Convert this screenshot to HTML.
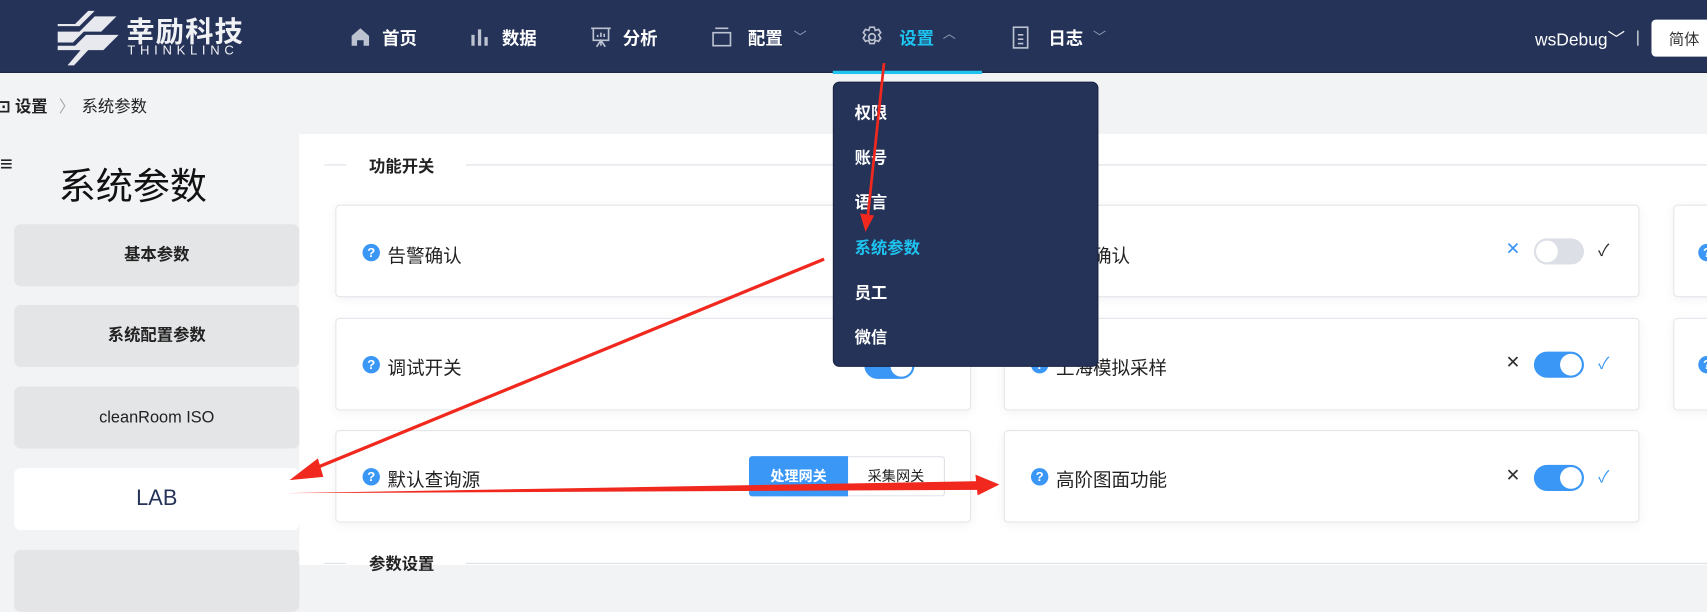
<!DOCTYPE html>
<html><head><meta charset="utf-8"><style>
*{margin:0;padding:0;box-sizing:border-box}
html,body{width:1707px;height:565px;overflow:hidden}
body{background:#f2f3f5;font-family:"Liberation Sans","Noto Sans CJK SC",sans-serif;color:#222}
#w{position:absolute;left:0;top:0;width:1568px;height:519px;transform:scale(1.08865);transform-origin:0 0;background:#f2f3f5}
.a{position:absolute}
.hdr{left:0;top:0;width:1568px;height:67px;background:#253358;border-bottom:1px solid #1a2444}
.nav{color:#fff;font-size:16px;font-weight:bold;top:22px}
.chev{color:#8c97b3;font-size:12px;top:25px}
.side{left:13px;width:262px;height:57px;background:#e4e5e7;border-radius:6px;text-align:center;line-height:57px;font-size:15px;font-weight:bold;color:#222}
.card{background:#fff;border:1px solid #e4e6eb;border-radius:4px;box-shadow:0 2px 10px rgba(0,0,0,.05);height:85px}
.q{width:16px;height:16px;border-radius:50%;background:#3a97f5;color:#fff;font-size:12px;line-height:16px;text-align:center;font-weight:bold}
.lbl{font-size:17px;color:#222}
.tg{width:46px;height:24px;border-radius:12px;background:#3a97f5}
.tg::after{content:"";position:absolute;right:2px;top:2px;width:20px;height:20px;border-radius:50%;background:#fff}
.tg.off{background:#dcdfe6}
.tg.off::after{left:2px;right:auto}
.dd{left:765px;top:75px;width:244px;height:262px;background:#253358;border-radius:6px;border:1px solid #1a2444}
.di{left:19px;color:#fff;font-size:15px;font-weight:bold}
</style></head><body><div id="w">
<div class="a hdr"></div>
<svg class="a" style="left:52px;top:8px" width="58" height="56" viewBox="0 0 58 56">
<path d="M1 14h16L29 2h6L21 16H1z M1 21h20L35 7h20L41 21H25L15 31H1z M1 34h16l10-10h30L43 38H29L16 52h-6l12-14H1z" fill="#e8e9ee"/>
</svg>
<div class="a" style="left:116px;top:9px;color:#f0f1f4;font-size:26px;font-weight:bold;letter-spacing:1px">幸励科技</div>
<div class="a" style="left:117px;top:39px;color:#f0f1f4;font-size:12px;letter-spacing:4.3px">THINKLINC</div>
<svg class="a" style="left:322px;top:25px" width="18" height="18"><path d="M1 8L9 1l8 7v9h-5v-5H6v5H1z" fill="#bcc2d0"/></svg>
<div class="a nav" style="left:351px">首页</div>
<svg class="a" style="left:432px;top:25px" width="18" height="18"><rect x="1" y="7" width="3" height="10" fill="#bcc2d0"/><rect x="7" y="2" width="3" height="15" fill="#bcc2d0"/><rect x="13" y="9" width="3" height="8" fill="#bcc2d0"/></svg>
<div class="a nav" style="left:461px">数据</div>
<svg class="a" style="left:542px;top:24px" width="20" height="20" fill="none" stroke="#bcc2d0" stroke-width="1.5"><path d="M1 2h18M3 2v11h14V2M10 13v5M6 19l4-6 4 6M7 10v-2M10 10V6M13 10V7"/></svg>
<div class="a nav" style="left:572px">分析</div>
<svg class="a" style="left:653px;top:25px" width="20" height="18" fill="none" stroke="#bcc2d0" stroke-width="1.5"><path d="M4 1h12M2 5h16v12H2z"/></svg>
<div class="a nav" style="left:687px">配置</div><div class="a chev" style="left:729px">﹀</div>
<svg class="a" style="left:791px;top:24px" width="20" height="20" fill="none" stroke="#bcc2d0" stroke-width="1.5"><circle cx="10" cy="10" r="3"/><path d="M8 1h4l1 3 3-1 2 3-2 2 2 3-2 3-3-1-1 3H8l-1-3-3 1-2-3 2-3-2-2 2-3 3 1z"/></svg>
<div class="a nav" style="left:826px;color:#1ec4f0">设置</div><div class="a chev" style="left:866px;top:22px">︿</div>
<div class="a" style="left:765px;top:65px;width:137px;height:3px;background:#1ec4f0"></div>
<svg class="a" style="left:930px;top:24px" width="16" height="22" fill="none" stroke="#bcc2d0" stroke-width="1.5"><rect x="1" y="1" width="13" height="19"/><path d="M5 8h5M5 12h5M5 16h5"/></svg>
<div class="a nav" style="left:963px">日志</div><div class="a chev" style="left:1004px">﹀</div>
<div class="a" style="left:1410px;top:23px;color:#fff;font-size:16px">wsDebug﹀</div>
<div class="a" style="left:1504px;top:28px;width:1px;height:14px;background:#fff"></div>
<div class="a" style="left:1517px;top:18px;width:60px;height:34px;background:#fff;border-radius:4px;font-size:14px;color:#333;padding:8px 0 0 16px">简体</div>

<div class="a" style="left:-3px;top:87px;font-size:15px;color:#222"><b>⊡ 设置</b> <span style="color:#aaa;margin:0 6px">〉</span>系统参数</div>
<div class="a" style="left:0;top:140px;font-size:20px;font-weight:bold">≡</div>
<div class="a" style="left:54px;top:144px;font-size:34px;color:#111">系统参数</div>
<div class="a side" style="top:206px">基本参数</div>
<div class="a side" style="top:280px">系统配置参数</div>
<div class="a side" style="top:355px;font-weight:normal">cleanRoom ISO</div>
<div class="a side" style="top:430px;background:#fff;font-weight:normal;font-size:20px;color:#253358">LAB</div>
<div class="a side" style="top:505px"></div>

<div class="a" style="left:275px;top:123px;width:1293px;height:396px;background:#fff"></div>
<div class="a" style="left:298px;top:151px;width:20px;height:1px;background:#dcdfe6"></div>
<div class="a" style="left:428px;top:151px;width:1140px;height:1px;background:#dcdfe6"></div>
<div class="a" style="left:339px;top:142px;font-size:15px;font-weight:bold">功能开关</div>
<div class="a" style="left:298px;top:517px;width:20px;height:1px;background:#dcdfe6"></div>
<div class="a" style="left:428px;top:517px;width:1140px;height:1px;background:#dcdfe6"></div>
<div class="a" style="left:339px;top:507px;font-size:15px;font-weight:bold">参数设置</div>

<div class="a card" style="left:308px;top:188px;width:584px"></div>
<div class="a card" style="left:308px;top:292px;width:584px"></div>
<div class="a card" style="left:308px;top:395px;width:584px"></div>
<div class="a card" style="left:922px;top:188px;width:584px"></div>
<div class="a card" style="left:922px;top:292px;width:584px"></div>
<div class="a card" style="left:922px;top:395px;width:584px"></div>
<div class="a card" style="left:1537px;top:188px;width:200px"></div>
<div class="a card" style="left:1537px;top:292px;width:200px"></div>

<div class="a q" style="left:333px;top:224px">?</div><div class="a lbl" style="left:356px;top:221px">告警确认</div>
<div class="a q" style="left:333px;top:327px">?</div><div class="a lbl" style="left:356px;top:324px">调试开关</div>
<div class="a q" style="left:333px;top:430px">?</div><div class="a lbl" style="left:356px;top:427px">默认查询源</div>
<div class="a tg" style="left:794px;top:324px"></div>
<div class="a" style="left:688px;top:419px;width:91px;height:37px;background:#3a97f5;border-radius:3px 0 0 3px;color:#fff;font-size:13px;font-weight:bold;text-align:center;line-height:37px">处理网关</div>
<div class="a" style="left:779px;top:419px;width:89px;height:37px;border:1px solid #dcdfe6;border-left:0;border-radius:0 3px 3px 0;font-size:13px;text-align:center;line-height:35px">采集网关</div>

<div class="a q" style="left:947px;top:224px">?</div><div class="a lbl" style="left:970px;top:221px">告警确认</div>
<div class="a q" style="left:947px;top:327px">?</div><div class="a lbl" style="left:970px;top:324px">上海模拟采样</div>
<div class="a q" style="left:947px;top:430px">?</div><div class="a lbl" style="left:970px;top:427px">高阶图面功能</div>
<div class="a" style="left:1383px;top:219px;color:#3a97f5;font-size:16px">✕</div>
<div class="a tg off" style="left:1409px;top:219px"></div>
<div class="a" style="left:1468px;top:219px;color:#222;font-size:15px">✓</div>
<div class="a" style="left:1383px;top:323px;color:#333;font-size:16px">✕</div>
<div class="a tg" style="left:1409px;top:323px"></div>
<div class="a" style="left:1468px;top:323px;color:#3a97f5;font-size:15px">✓</div>
<div class="a" style="left:1383px;top:427px;color:#333;font-size:16px">✕</div>
<div class="a tg" style="left:1409px;top:427px"></div>
<div class="a" style="left:1468px;top:427px;color:#3a97f5;font-size:15px">✓</div>
<div class="a q" style="left:1560px;top:224px">?</div>
<div class="a q" style="left:1560px;top:327px">?</div>

<div class="a dd">
<div class="a di" style="top:17px">权限</div>
<div class="a di" style="top:58px">账号</div>
<div class="a di" style="top:99px">语言</div>
<div class="a di" style="top:141px;color:#1ec4f0">系统参数</div>
<div class="a di" style="top:182px">员工</div>
<div class="a di" style="top:223px">微信</div>
</div>

<svg class="a" style="left:0;top:0" width="1568" height="519">
<line x1="812" y1="58" x2="797" y2="200" stroke="#f0281e" stroke-width="2.5"/>
<polygon points="790,196 803,198 795,213" fill="#f0281e"/>
<line x1="757" y1="238" x2="285" y2="432" stroke="#f0281e" stroke-width="3"/>
<polygon points="266,441 292,421 297,438" fill="#f0281e"/>
<polygon points="262,453 900,442 900,450" fill="#f0281e"/>
<polygon points="918,445 896,436 898,455" fill="#f0281e"/>
</svg>
</div></body></html>
